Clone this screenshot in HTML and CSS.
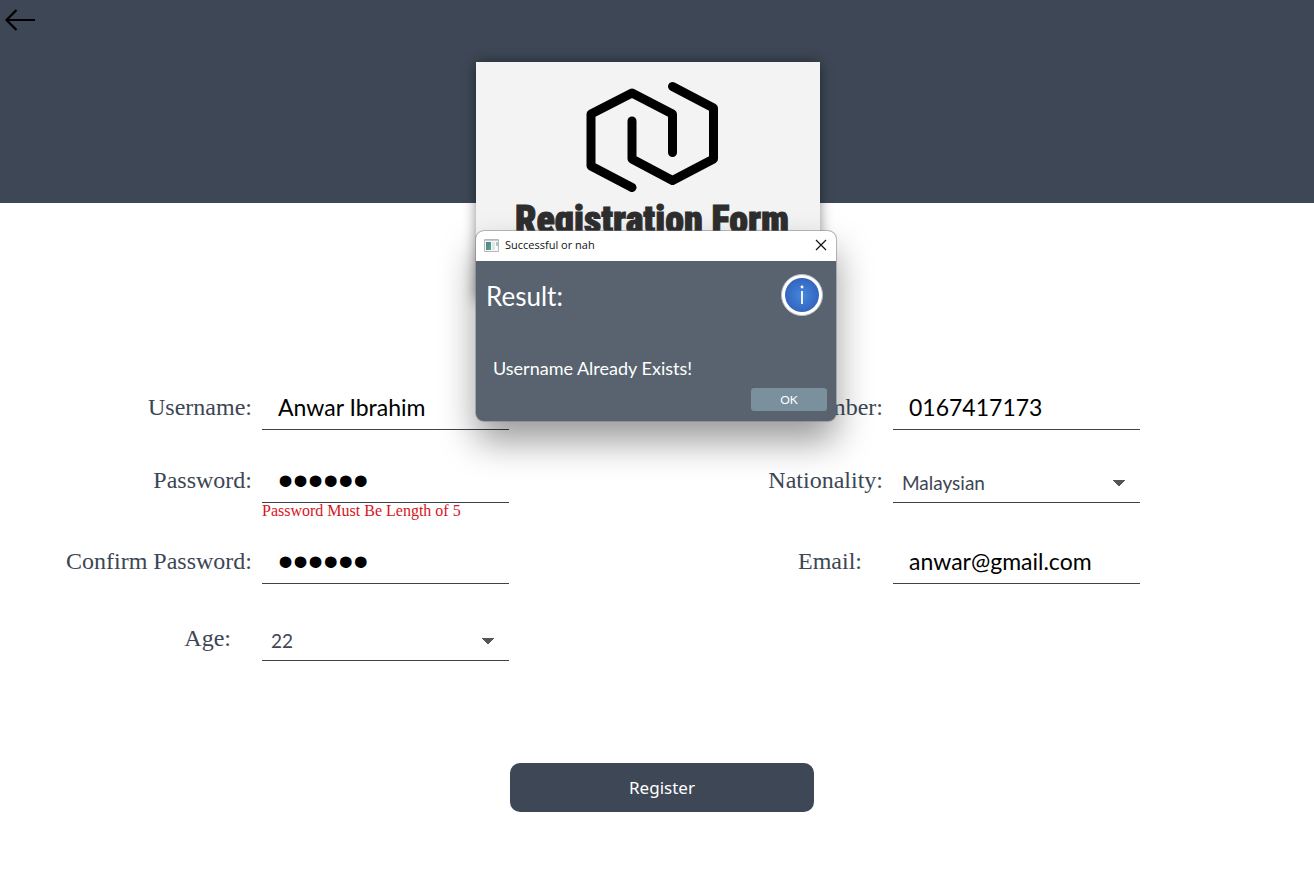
FILE: index.html
```html
<!DOCTYPE html>
<html lang="en">
<head>
<meta charset="utf-8">
<meta name="viewport" content="width=device-width, initial-scale=1">
<title>Registration Form</title>
<link rel="stylesheet" href="styles.css">
</head>
<body>
<header class="banner">
  <button class="back" type="button" aria-label="Back">
    <svg width="32" height="24" viewBox="0 0 32 24" fill="none" stroke="#000" stroke-width="2.2"><path d="M31 12H3M12.500 2L2.500 12L12.500 22"/></svg>
  </button>
  <div class="card">
    <svg class="logo" width="132" height="112" viewBox="0 0 132 112" fill="none" stroke="#000" stroke-width="9" stroke-linecap="round" stroke-linejoin="round"><path d="M46 106.500L5 85V33L46 12L86.500 33V71.500M86.500 5.500L127.500 27V78L86.500 99.500L46 78V40"/></svg>
    <h1 class="title">Registration Form</h1>
  </div>
</header>
<main>
  <form class="form">
    <div class="column">
      <div class="row">
        <label class="label" for="username">Username:</label>
        <div class="field"><input class="input" id="username" type="text" value="Anwar Ibrahim"></div>
      </div>
      <div class="row">
        <label class="label" for="password">Password:</label>
        <div class="field"><input class="input input-secret" id="password" type="password" value="123456" aria-describedby="password-error"><p class="error" id="password-error">Password Must Be Length of 5</p></div>
      </div>
      <div class="row">
        <label class="label" for="confirm">Confirm Password:</label>
        <div class="field"><input class="input input-secret" id="confirm" type="password" value="123456"></div>
      </div>
      <div class="row">
        <label class="label label-short" for="age">Age:</label>
        <div class="field"><select class="select" id="age"><option>22</option></select></div>
      </div>
    </div>
    <div class="column">
      <div class="row">
        <label class="label" for="phone">Phone Number:</label>
        <div class="field"><input class="input" id="phone" type="tel" value="0167417173"></div>
      </div>
      <div class="row">
        <label class="label" for="nationality">Nationality:</label>
        <div class="field"><select class="select" id="nationality"><option>Malaysian</option></select></div>
      </div>
      <div class="row">
        <label class="label label-short" for="email">Email:</label>
        <div class="field"><input class="input" id="email" type="email" value="anwar@gmail.com"></div>
      </div>
    </div>
    <button class="register" type="submit">Register</button>
  </form>
</main>
<section class="dialog" role="dialog" aria-labelledby="dialog-title">
  <div class="dialog-bar">
    <svg width="15" height="13" viewBox="0 0 15 13"><defs><linearGradient id="pane" x2="1" y2="1"><stop stop-color="#4d7f99"/><stop offset="1" stop-color="#58a878"/></linearGradient></defs><path fill="#fafafa" stroke="#b4b8bc" d="M.5.5h14v12H.5z"/><path fill="#c8cbce" d="M1 1h13v1H1z"/><path fill="url(#pane)" d="M2 3h5v8H2z"/><path fill="#dfe7e9" d="M8 3h3v8H8z"/><path fill="#a9c7c3" d="M12 3h2v4h-2z"/></svg>
    <span class="dialog-title" id="dialog-title">Successful or nah</span>
    <button class="close" type="button" aria-label="Close"><svg width="12" height="12" viewBox="0 0 12 12" stroke="#111" stroke-width="1.2"><path d="M1 1l10 10M11 1L1 11"/></svg></button>
  </div>
  <div class="dialog-head">
    <h2 class="result">Result:</h2>
    <svg width="42" height="42" viewBox="0 0 42 42"><defs><radialGradient id="blue"><stop stop-color="#4388dc"/><stop offset="1" stop-color="#3564bf"/></radialGradient></defs><circle cx="21" cy="21" r="20.500" fill="#fff" stroke="#b9bec4"/><circle cx="21" cy="21" r="17" fill="url(#blue)"/><circle cx="21" cy="13" r="1.400" fill="#fff"/><path stroke="#fff" stroke-width="1.800" d="M21 17v13"/></svg>
  </div>
  <p class="message">Username Already Exists!</p>
  <button class="ok" type="button">OK</button>
</section>
</body>
</html>
```
FILE: styles.css
```css
* { box-sizing: border-box; }

body {
  margin: 0;
  position: relative;
  min-height: 100vh;
  background: #fff;
  color: #3d4654;
  font-family: Lato, sans-serif;
}

button { padding: 0; border: 0; font: inherit; cursor: pointer; }

.banner {
  display: flex;
  justify-content: center;
  padding-top: 62px;
  background: #3e4756;
}

.back {
  position: absolute;
  top: 8px;
  left: 4px;
  background: none;
  line-height: 0;
}

.card {
  display: flex;
  flex-direction: column;
  align-items: center;
  width: 344px;
  height: 238px;
  margin: 0 18px -97px 0;
  padding: 19px 0 0 8px;
  background: #f3f3f3;
  box-shadow: 0 0 12px rgba(0, 0, 0, 0.45);
}

.title {
  margin: 3px 0 0;
  color: #2e2e2e;
  font: 900 38px/48px Impact, "Roboto Condensed", "Liberation Sans Narrow", sans-serif;
  -webkit-text-stroke: 1px #2e2e2e;
  white-space: nowrap;
}

.form {
  display: grid;
  grid-template-columns: 509fr 631fr 174fr;
  padding-top: 187px;
}

.column {
  display: grid;
  grid-template-rows: 73px 81px 77px 40px;
}

.row {
  display: flex;
  justify-content: flex-end;
}

.label {
  margin-right: 10px;
  font: 24px/34px "Liberation Serif", serif;
  white-space: nowrap;
}

.label-short { margin-right: 31px; }

.field { width: 247px; }

.input,
.select {
  display: block;
  width: 100%;
  height: 40px;
  border: 0;
  border-bottom: 1px solid #3f444b;
  border-radius: 0;
  outline: 0;
  background-color: transparent;
}

.input {
  padding: 0 16px 6px;
  color: #000;
  font: 23px/34px Lato, sans-serif;
}

.input-secret {
  padding-bottom: 4px;
  font: 43px/34px "Liberation Sans", sans-serif;
}

.select {
  appearance: none;
  padding: 0 9px;
  color: #3d4654;
  font: 19px/34px Lato, sans-serif;
  background-image: linear-gradient(to top right, transparent 50%, #555 51%), linear-gradient(to top left, transparent 50%, #555 51%);
  background-position: right 21px top 17px, right 14px top 17px;
  background-size: 7px 7px;
  background-repeat: no-repeat;
}

.error {
  margin: 0;
  color: #d8141c;
  font: 16px/16px "Liberation Serif", serif;
  white-space: nowrap;
}

.register {
  grid-column: 1 / -1;
  justify-self: center;
  width: 304px;
  height: 49px;
  margin: 102px 0 32px 10px;
  border-radius: 10px;
  background: #3e4756;
  color: #fff;
  font: 17px/24px "Noto Sans", sans-serif;
}

.dialog {
  position: absolute;
  top: 231px;
  left: calc(50% - 181px);
  display: flex;
  flex-direction: column;
  width: 360px;
  height: 190px;
  overflow: hidden;
  border-radius: 8px;
  background: #58636f;
  color: #fff;
  box-shadow: 0 0 0 1px rgba(120, 125, 130, 0.5), 0 20px 36px rgba(0, 0, 0, 0.4);
}

.dialog-bar {
  display: flex;
  align-items: center;
  gap: 6px;
  height: 30px;
  padding: 0 9px 2px 8px;
  background: #fff;
  color: #111;
}

.dialog-title { font: 11px/16px "Open Sans", sans-serif; }

.close {
  margin-left: auto;
  background: none;
  line-height: 0;
}

.dialog-head {
  display: flex;
  justify-content: space-between;
  padding: 13px 13px 0 10px;
}

.result { margin: 0; font: 26px/44px Lato, sans-serif; }

.message {
  margin: 38px 0 0 17px;
  font: 18px/24px Lato, sans-serif;
}

.ok {
  align-self: flex-end;
  width: 76px;
  height: 23px;
  margin: 8px 9px 0 0;
  border-radius: 3px;
  background: #7b909d;
  color: #fff;
  font: 12px/16px Lato, sans-serif;
}
```
